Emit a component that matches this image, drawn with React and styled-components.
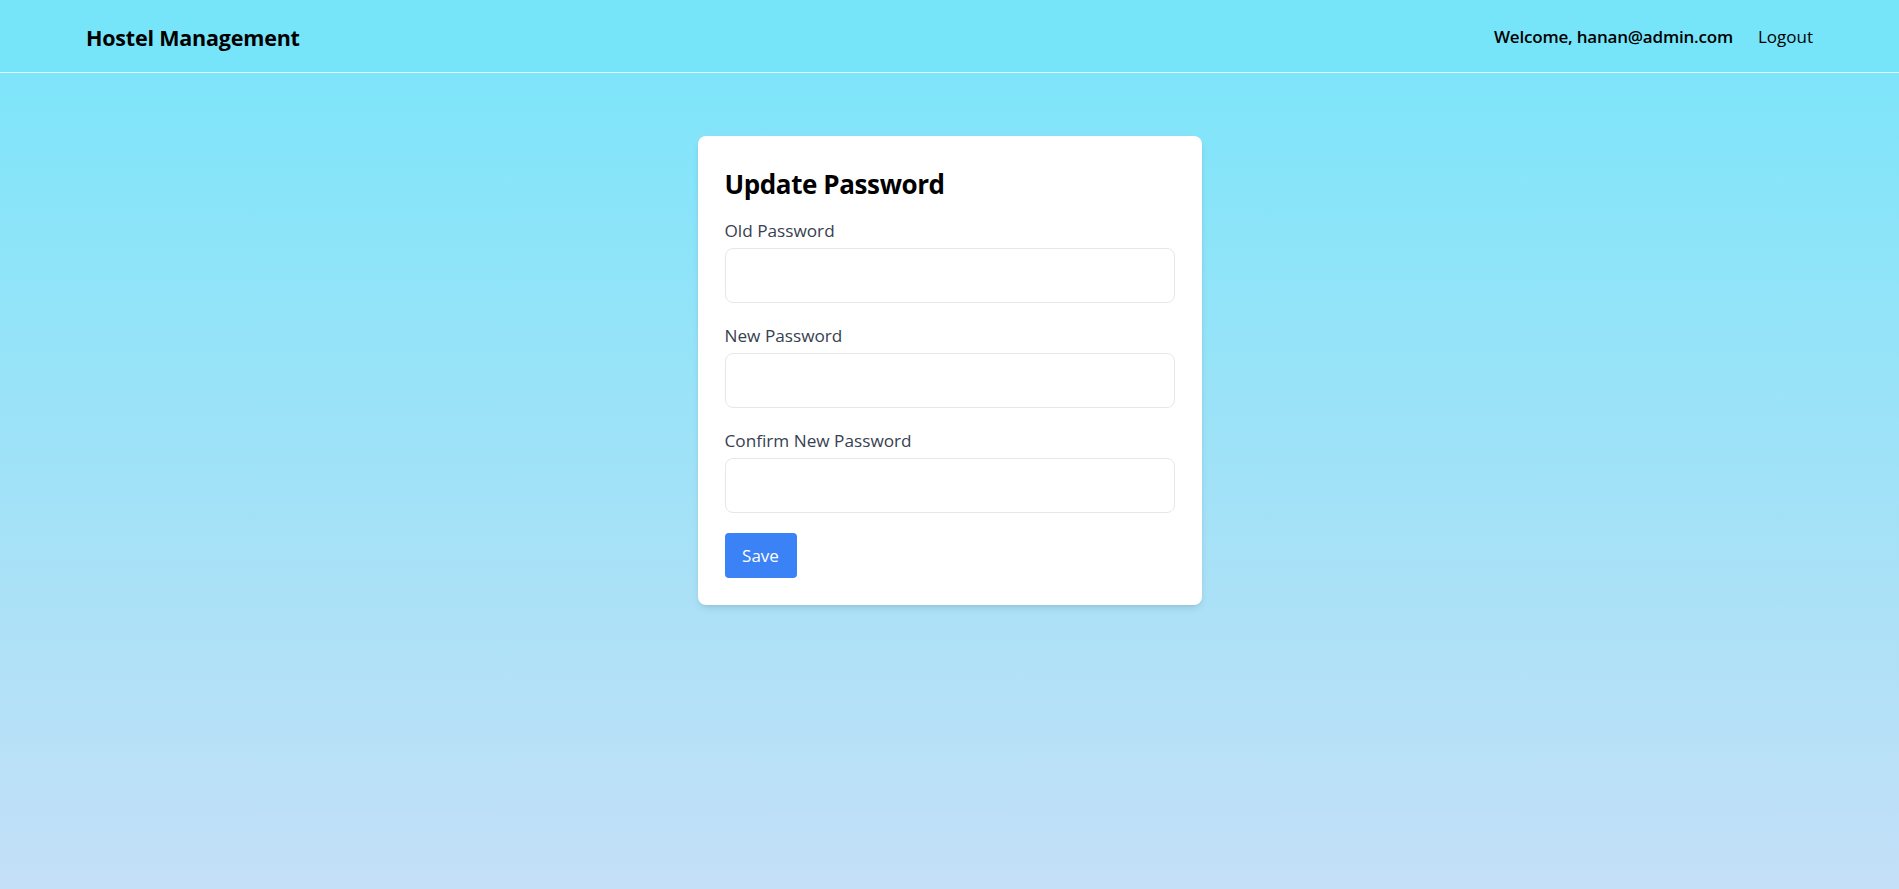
import React from 'react';
import styled, { createGlobalStyle } from 'styled-components';

const GlobalStyle = createGlobalStyle`
  * {
    box-sizing: border-box;
  }

  body {
    margin: 0;
    font-family: "Open Sans", "Noto Sans", sans-serif;
    color: #000;
  }
`;

const Page = styled.div`
  min-height: 889px;
  display: flex;
  flex-direction: column;
  background: linear-gradient(to bottom, #78e5fa 0%, #8fe4f9 30%, #a9e1f7 65%, #c4e0f8 100%);
`;

const NavBar = styled.header`
  height: 73px;
  display: flex;
  align-items: center;
  justify-content: space-between;
  padding: 0 86px;
  background: #76e5f9;
  border-bottom: 1px solid rgba(255, 255, 255, 0.75);
`;

const Brand = styled.div`
  font-size: 21.5px;
  font-weight: 700;
  letter-spacing: -0.2px;
  margin-top: 3px;
`;

const NavRight = styled.div`
  display: flex;
  align-items: center;
  gap: 25px;
`;

const Welcome = styled.span`
  font-size: 17px;
  font-weight: 600;
  letter-spacing: -0.2px;
`;

const LogoutLink = styled.button`
  font-family: inherit;
  font-size: 17px;
  font-weight: 400;
  color: #000;
  background: none;
  border: none;
  padding: 0;
  cursor: pointer;
`;

const Main = styled.main`
  display: flex;
  justify-content: center;
  padding-top: 63px;
`;

const Card = styled.form`
  width: 504px;
  background: #fff;
  border-radius: 8px;
  padding: 29px 27px 27px;
  box-shadow: 0 4px 8px -2px rgba(0, 0, 0, 0.12), 0 2px 4px -2px rgba(0, 0, 0, 0.08);
`;

const Title = styled.h2`
  margin: 0 0 15px;
  font-size: 26px;
  line-height: 38px;
  font-weight: 700;
  letter-spacing: -0.4px;
`;

const Field = styled.div`
  margin-bottom: 20px;
`;

const Label = styled.label`
  display: block;
  font-size: 17.2px;
  line-height: 25px;
  font-weight: 500;
  color: #374151;
  margin-bottom: 5px;
`;

const Input = styled.input`
  display: block;
  width: 100%;
  height: 55px;
  border: 1px solid #e5e7eb;
  border-radius: 8px;
  padding: 0 14px;
  font-family: inherit;
  font-size: 17px;
  outline: none;
`;

const SaveButton = styled.button`
  width: 72px;
  height: 45px;
  border: none;
  border-radius: 4px;
  background: #3b82f6;
  color: #fff;
  font-family: inherit;
  font-size: 17px;
  cursor: pointer;
`;

const fields = [
  { id: 'old', label: 'Old Password' },
  { id: 'new', label: 'New Password' },
  { id: 'confirm', label: 'Confirm New Password' },
];

const App = () => {
  return (
    <>
      <GlobalStyle />
      <Page>
        <NavBar>
          <Brand>Hostel Management</Brand>
          <NavRight>
            <Welcome>Welcome, hanan@admin.com</Welcome>
            <LogoutLink type="button">Logout</LogoutLink>
          </NavRight>
        </NavBar>
        <Main>
          <Card onSubmit={(e) => e.preventDefault()}>
            <Title>Update Password</Title>
            {fields.map((f) => (
              <Field key={f.id}>
                <Label htmlFor={f.id}>{f.label}</Label>
                <Input id={f.id} type="password" />
              </Field>
            ))}
            <SaveButton type="submit">Save</SaveButton>
          </Card>
        </Main>
      </Page>
    </>
  );
};

export default App;
